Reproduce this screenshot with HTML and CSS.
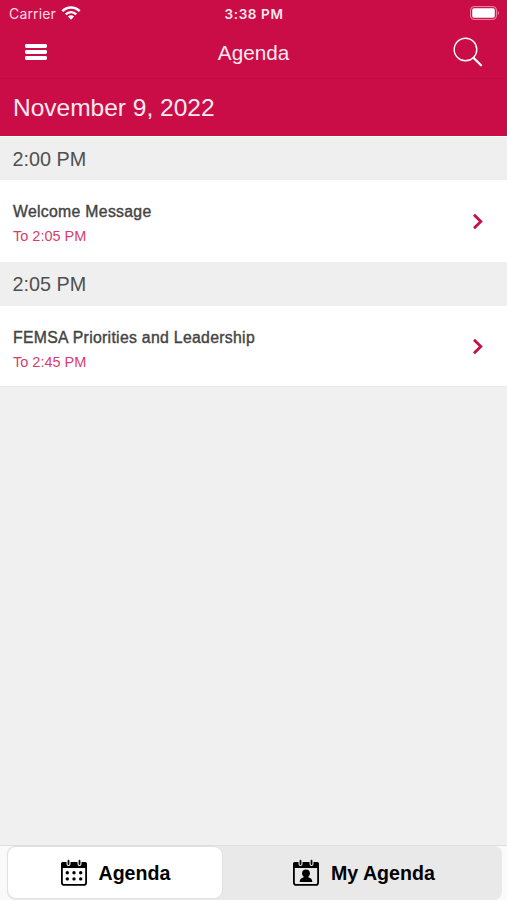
FILE: index.html
```html
<!DOCTYPE html>
<html lang="en">
<head>
<meta charset="utf-8">
<title>Agenda</title>
<link rel="stylesheet" href="styles.css">
</head>
<body>
<div class="app">
  <header class="header">
    <div class="status">
      <span class="carrier">Carrier
        <svg width="20" height="16" viewBox="0 0 20 16" fill="none" stroke="#fff" stroke-width="2.4"><path d="M1.3 6.2C6.3 1.2 13.7 1.2 18.7 6.2M4.7 9.4C7.8 6.5 12.2 6.5 15.3 9.4"/><path d="M6.9 11.6Q10 9 13.1 11.6L10 14.8Z" fill="#fff" stroke="none"/></svg>
      </span>
      <span class="clock">3:38 PM</span>
      <svg class="battery" width="30" height="14" viewBox="0 0 30 14"><rect x=".6" y=".6" width="25.8" height="12.8" rx="3.4" fill="none" stroke="#eb91ac"/><rect x="2.2" y="2.2" width="22.6" height="9.6" rx="1.8" fill="#fff"/><path d="M27.8 4.8Q30 7 27.8 9.2Z" fill="#eb91ac"/></svg>
    </div>
    <div class="navbar">
      <svg class="menu" width="24" height="18" viewBox="0 0 24 18" fill="#fff"><rect x="1" y="1" width="22" height="4" rx="1.4"/><rect x="1" y="7" width="22" height="4" rx="1.4"/><rect x="1" y="13" width="22" height="4" rx="1.4"/></svg>
      <h1 class="title">Agenda</h1>
      <svg class="search" width="30" height="31" viewBox="0 0 30 31" fill="none" stroke="#fff"><circle cx="12.5" cy="12.5" r="11.3" stroke-width="1.4"/><path d="M20.7 21L28 28.2" stroke-width="2.3" stroke-linecap="round"/></svg>
    </div>
  </header>
  <div class="date">November 9, 2022</div>
  <main class="list">
    <h2 class="time">2:00 PM</h2>
    <div class="session">
      <div class="details"><div class="name">Welcome Message</div><div class="until">To 2:05 PM</div></div>
      <svg width="12" height="17" viewBox="0 0 12 17" fill="none" stroke="#cb0d47" stroke-width="2.8"><path d="M2 1.8L8.8 8.5L2 15.2"/></svg>
    </div>
    <h2 class="time second">2:05 PM</h2>
    <div class="session last">
      <div class="details"><div class="name">FEMSA Priorities and Leadership</div><div class="until">To 2:45 PM</div></div>
      <svg width="12" height="17" viewBox="0 0 12 17" fill="none" stroke="#cb0d47" stroke-width="2.8"><path d="M2 1.8L8.8 8.5L2 15.2"/></svg>
    </div>
  </main>
  <nav class="tabs">
    <div class="segments">
      <div class="tab active">
        <svg width="28" height="28" viewBox="0 0 28 28"><rect x="1.9" y="4" width="24.2" height="21.9" rx="2.2" fill="none" stroke="#000" stroke-width="1.8"/><path d="M1 9V5Q1 3 3 3H25Q27 3 27 5V9Z"/><g stroke="#fff" stroke-width="4" stroke-linecap="round"><path d="M8.5 2.3V5M19.5 2.3V5"/></g><g stroke="#000" stroke-width="1.8" stroke-linecap="round"><path d="M8.5 1.7V5M19.5 1.7V5"/></g><g><circle cx="7.3" cy="13.7" r="1.7"/><circle cx="14" cy="13.7" r="1.7"/><circle cx="20.7" cy="13.7" r="1.7"/><circle cx="7.3" cy="19.9" r="1.7"/><circle cx="14" cy="19.9" r="1.7"/><circle cx="20.7" cy="19.9" r="1.7"/></g></svg>
        <span>Agenda</span>
      </div>
      <div class="tab mine">
        <svg width="28" height="28" viewBox="0 0 28 28"><rect x="1.9" y="4" width="24.2" height="21.9" rx="2.2" fill="none" stroke="#000" stroke-width="1.8"/><path d="M1 9V5Q1 3 3 3H25Q27 3 27 5V9Z"/><g stroke="#e9e9e9" stroke-width="4" stroke-linecap="round"><path d="M8.5 2.3V5M19.5 2.3V5"/></g><g stroke="#000" stroke-width="1.8" stroke-linecap="round"><path d="M8.5 1.7V5M19.5 1.7V5"/></g><circle cx="14" cy="14.3" r="3.9"/><path d="M7.7 23C7.7 20 9 19.3 12 18V17H16V18C19 19.3 20.3 20 20.3 23Z"/></svg>
        <span>My Agenda</span>
      </div>
    </div>
  </nav>
</div>
</body>
</html>
```
FILE: styles.css
```css
* { box-sizing: border-box; }
body { margin: 0; font-family: "Liberation Sans", Arial, sans-serif; background: #f0f0f0; }
svg { display: block; flex: none; }
h1, h2 { margin: 0; font-weight: 400; }
.app { width: 507px; height: 900px; display: flex; flex-direction: column; overflow: hidden; }
.header { height: 79px; background: #cb0d47; color: #fff; border-bottom: 1px solid #bf0c43; }
.status { height: 27px; display: grid; grid-template-columns: 1fr auto 1fr; align-items: center; padding: 0 7px 0 9px; font: 400 14px/27px Inter, sans-serif; }
.carrier { display: flex; align-items: center; gap: 5px; color: #fbdce5; letter-spacing: .15px; }
.carrier svg { margin-top: -2px; }
.clock { padding-top: 1px; font-size: 13.5px; line-height: 26px; font-weight: 600; letter-spacing: .6px; color: #fde9ef; margin-right: 1px; }
.battery { justify-self: end; margin-top: -1px; }
.navbar { height: 51px; display: grid; grid-template-columns: 1fr auto 1fr; align-items: center; padding: 0 24px; }
.menu { margin-top: -2px; }
.title { font-size: 20.7px; line-height: 50px; color: #fdeaf0; }
.search { justify-self: end; }
.date { height: 57px; padding-left: 13px; background: #cb0d47; color: #fdeaf0; font-size: 24.5px; line-height: 57px; }
.list { flex: 1; }
.time { height: 44px; padding-left: 12.5px; border-top: 1px solid #fff; background: #efefef; color: #505050; font-size: 19.8px; line-height: 44px; }
.second { border: 0; line-height: 45px; }
.session { height: 82px; display: flex; justify-content: space-between; align-items: center; padding: 0 23px 0 13px; background: #fff; }
.last { height: 81px; border-bottom: 1px solid #e9e9e9; padding-top: 1px; }
.details { padding-top: 6px; }
.name { font-size: 15.8px; line-height: 25px; letter-spacing: .3px; color: #444; -webkit-text-stroke: .4px #444; }
.until { font-size: 14.5px; line-height: 25px; color: #d83d6d; }
.tabs { height: 55px; padding: 0 5px 0 7px; border-top: 1px solid #dedede; background: #fafafa; }
.segments { height: 54px; display: flex; border-radius: 8px; background: #e9e9e9; }
.tab { display: flex; align-items: center; gap: 11px; font-size: 19.6px; font-weight: 700; color: #000; }
.active { width: 216px; height: 53px; padding: 1px 0 0 51.5px; border: 1px solid #e0e0e0; border-radius: 9px; background: #fff; }
.mine { height: 54px; padding-left: 69px; }
```
